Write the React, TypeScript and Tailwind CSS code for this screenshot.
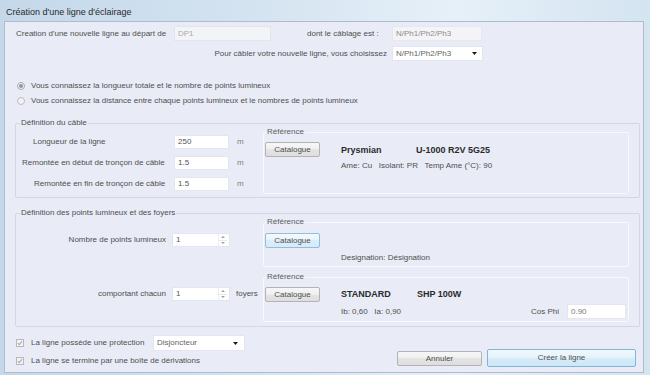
import React from "react";

function Field({ w, value, cls }: { w: string; value: string; cls?: string }) {
  return (
    <div className={`${w} h-full bg-white border border-[#e3e6ee] flex items-center pl-[3px] text-[#555] ${cls ?? ""}`}>
      {value}
    </div>
  );
}

function Arrow() {
  return (
    <svg width="5" height="3" viewBox="0 0 5 3" className="shrink-0">
      <path d="M0 0H5L2.5 3Z" fill="#1a1a1a" />
    </svg>
  );
}

function Spin({ value }: { value: string }) {
  return (
    <div className="w-[58px] h-[14px] bg-white border border-[#e3e6ee] flex items-center text-[#555]">
      <div className="flex-1 pl-[3px]">{value}</div>
      <div className="w-[9px] h-full mr-[2px] flex flex-col border-l border-[#eceef3]">
        <div className="flex-1 flex items-center justify-center border-b border-[#e6e8ee]">
          <svg width="4" height="2" viewBox="0 0 4 2"><path d="M0 2H4L2 0Z" fill="#a0a0a0" /></svg>
        </div>
        <div className="flex-1 flex items-center justify-center">
          <svg width="4" height="2" viewBox="0 0 4 2"><path d="M0 0H4L2 2Z" fill="#a0a0a0" /></svg>
        </div>
      </div>
    </div>
  );
}

function Catalogue({ focused }: { focused?: boolean }) {
  return (
    <div
      className={
        focused
          ? "w-[55px] h-[15px] shrink-0 flex items-center justify-center rounded-[2px] border border-[#8dbfe0] bg-[linear-gradient(#f4fafd,#e8f4fb_50%,#dcedf8_50%,#d6ebf7)] text-[#505050]"
          : "w-[55px] h-[15px] shrink-0 flex items-center justify-center rounded-[2px] border border-[#b3b3b3] bg-[linear-gradient(#f7f7f7,#efefef_50%,#e4e4e4_50%,#dedede)] text-[#505050]"
      }
    >
      Catalogue
    </div>
  );
}

function Check() {
  return (
    <div className="w-[8px] h-[8px] shrink-0 border border-[#b9b9b9] bg-[#f2f3f5] flex items-center justify-center">
      <svg width="6" height="6" viewBox="0 0 6 6">
        <path d="M0.8 3.2L2.3 4.7L5.2 1" stroke="#a6aeb8" strokeWidth="1.1" fill="none" />
      </svg>
    </div>
  );
}

export default function App() {
  return (
    <div className="w-[650px] h-[375px] flex flex-col overflow-hidden bg-[linear-gradient(90deg,#c4d8ea_0%,#d2e2f0_35%,#e6f0f8_70%,#d4e4f1_100%)] font-['Liberation_Sans',Arial,sans-serif] text-[8px] text-[#4e4e4e] leading-[12px]">
      <div className="h-[21px] shrink-0 flex items-center pl-[6px] pt-[2px] text-[9px] text-[#2a2a2a]">
        Création d'une ligne d'éclairage
      </div>
      <div className="ml-[4px] mr-[6px] mb-[2px] flex-1 border border-[#adbccf] bg-[#e9ecf7] flex flex-col">
        {/* Row A */}
        <div className="mt-[4px] h-[15px] flex items-center">
          <div className="w-[169px] pl-[11px]">Creation d'une nouvelle ligne au départ de</div>
          <div className="w-[97px] h-full bg-[#f3f4f7] border border-[#e2e5ec] flex items-center pl-[3px] text-[#ababab]">DP1</div>
          <div className="w-[121px] pl-[36px]">dont le câblage est :</div>
          <div className="w-[90px] h-full bg-[#f4f4f6] border border-[#e6e8ee] flex items-center pl-[3px] text-[#8c8c8c]">N/Ph1/Ph2/Ph3</div>
        </div>
        {/* Row B */}
        <div className="mt-[5px] h-[15px] flex items-center">
          <div className="w-[387px] text-right pr-[5px]">Pour câbler votre nouvelle ligne, vous choisissez</div>
          <div className="w-[91px] h-full bg-white border border-[#e3e6ee] flex items-center pl-[3px] pr-[5px] text-[#666]">
            <span className="flex-1">N/Ph1/Ph2/Ph3</span>
            <Arrow />
          </div>
        </div>
        {/* Radios */}
        <div className="mt-[19px] h-[12px] flex items-center pl-[12px] gap-[6px]">
          <div className="w-[8px] h-[8px] rounded-full border border-[#acacac] bg-[#f2f2f2] flex items-center justify-center">
            <div className="w-[4px] h-[4px] rounded-full bg-[#8598ae]" />
          </div>
          <span>Vous connaissez la longueur totale et le nombre de points lumineux</span>
        </div>
        <div className="mt-[3px] h-[12px] flex items-center pl-[12px] gap-[6px]">
          <div className="w-[8px] h-[8px] rounded-full border border-[#bcbcbc] bg-[#f2f2f2]" />
          <span>Vous connaissez la distance entre chaque points lumineux et le nombres de points lumineux</span>
        </div>

        {/* Group 1 */}
        <fieldset className="mt-[11px] ml-[10px] w-[625px] border border-[#d2d7e4] rounded-[2px] pb-[3px]">
          <legend className="ml-[4px] px-[1px] leading-[10px]">Définition du câble</legend>
          <div className="flex">
            <div className="w-[247px] flex flex-col pt-[7px] gap-[7px]">
              <div className="h-[14px] flex items-center">
                <div className="w-[158px] pl-[17px]">Longueur de la ligne</div>
                <Field w="w-[55px]" value="250" />
                <span className="ml-[8px] text-[#808080]">m</span>
              </div>
              <div className="h-[14px] flex items-center">
                <div className="w-[158px] pl-[6px]">Remontée en début de tronçon de câble</div>
                <Field w="w-[55px]" value="1.5" />
                <span className="ml-[8px] text-[#808080]">m</span>
              </div>
              <div className="h-[14px] flex items-center">
                <div className="w-[158px] pl-[18px]">Remontée en fin de tronçon de câble</div>
                <Field w="w-[55px]" value="1.5" />
                <span className="ml-[8px] text-[#808080]">m</span>
              </div>
            </div>
            <fieldset className="mt-[-1px] w-[366px] h-[67px] border border-[#f8f9fd] rounded-[2px]">
              <legend className="ml-[2px] px-[1px] leading-[10px] text-[#5e5e5e]">Référence</legend>
              <div className="flex">
                <div className="ml-[1px] mt-[5px]"><Catalogue /></div>
                <div className="ml-[21px] mt-[7px] flex flex-col">
                  <div className="flex font-bold text-[9px] text-[#2a2a2a]">
                    <span className="w-[75px]">Prysmian</span>
                    <span>U-1000 R2V 5G25</span>
                  </div>
                  <div className="mt-[4px] whitespace-pre">Ame: Cu   Isolant: PR   Temp Ame (°C): 90</div>
                </div>
              </div>
            </fieldset>
          </div>
        </fieldset>

        {/* Group 2 */}
        <fieldset className="mt-[10px] ml-[10px] w-[625px] border border-[#d2d7e4] rounded-[2px] pb-[4px]">
          <legend className="ml-[4px] px-[1px] leading-[10px]">Définition des points lumineux et des foyers</legend>
          <div className="flex">
            <div className="w-[247px] flex flex-col">
              <div className="mt-[15px] h-[14px] flex items-center">
                <div className="w-[150px] text-right">Nombre de points lumineux</div>
                <div className="ml-[6px]"><Spin value="1" /></div>
              </div>
              <div className="mt-[40px] h-[14px] flex items-center">
                <div className="w-[150px] text-right">comportant chacun</div>
                <div className="ml-[6px]"><Spin value="1" /></div>
                <span className="ml-[6px]">foyers</span>
              </div>
            </div>
            <div className="w-[366px] mt-[-1px] flex flex-col">
              <fieldset className="h-[50px] border border-[#f8f9fd] rounded-[2px]">
                <legend className="ml-[2px] px-[1px] leading-[10px] text-[#5e5e5e]">Référence</legend>
                <div className="flex flex-col">
                  <div className="ml-[1px] mt-[6px]"><Catalogue focused /></div>
                  <div className="ml-[77px] mt-[4px]">Designation: Désignation</div>
                </div>
              </fieldset>
              <fieldset className="mt-[5px] h-[50px] border border-[#f8f9fd] rounded-[2px]">
                <legend className="ml-[2px] px-[1px] leading-[10px] text-[#5e5e5e]">Référence</legend>
                <div className="flex">
                  <div className="ml-[1px] mt-[5px]"><Catalogue /></div>
                  <div className="ml-[21px] mt-[6px] flex flex-col">
                    <div className="flex font-bold text-[9px] text-[#2a2a2a]">
                      <span className="w-[76px]">STANDARD</span>
                      <span>SHP 100W</span>
                    </div>
                    <div className="mt-[4px] w-[285px] h-[15px] flex items-center">
                      <span className="whitespace-pre">Ib: 0,60   Ia: 0,90</span>
                      <span className="ml-auto">Cos Phi</span>
                      <div className="ml-[8px] w-[59px] h-full bg-white border border-[#e3e6ee] flex items-center pl-[3px] text-[#7a7a7a]">0.90</div>
                    </div>
                  </div>
                </div>
              </fieldset>
            </div>
          </div>
        </fieldset>

        {/* Bottom */}
        <div className="mt-[8px] flex items-end">
          <div className="pl-[11px] flex flex-col">
            <div className="h-[16px] flex items-center">
              <Check />
              <div className="ml-[7px] w-[122px]">La ligne possède une protection</div>
              <div className="w-[92px] h-full bg-white border border-[#e3e6ee] flex items-center pl-[3px] pr-[6px] text-[#666]">
                <span className="flex-1">Disjoncteur</span>
                <Arrow />
              </div>
            </div>
            <div className="mt-[4px] h-[12px] flex items-center">
              <Check />
              <div className="ml-[7px]">La ligne se termine par une boîte de dérivations</div>
            </div>
          </div>
          <div className="ml-auto mr-[7px] flex items-end gap-[5px]">
            <div className="mb-[1px] w-[85px] h-[15px] flex items-center justify-center rounded-[2px] border border-[#b3b3b3] bg-[linear-gradient(#f7f7f7,#efefef_50%,#e4e4e4_50%,#dedede)] text-[#505050]">
              Annuler
            </div>
            <div className="w-[149px] h-[18px] flex items-center justify-center rounded-[2px] border border-[#82b4d9] bg-[linear-gradient(#f0f8fd,#e4f2fa_50%,#d6ecf8_50%,#cde7f6)] text-[#505050]">
              Créer la ligne
            </div>
          </div>
        </div>
      </div>
    </div>
  );
}
